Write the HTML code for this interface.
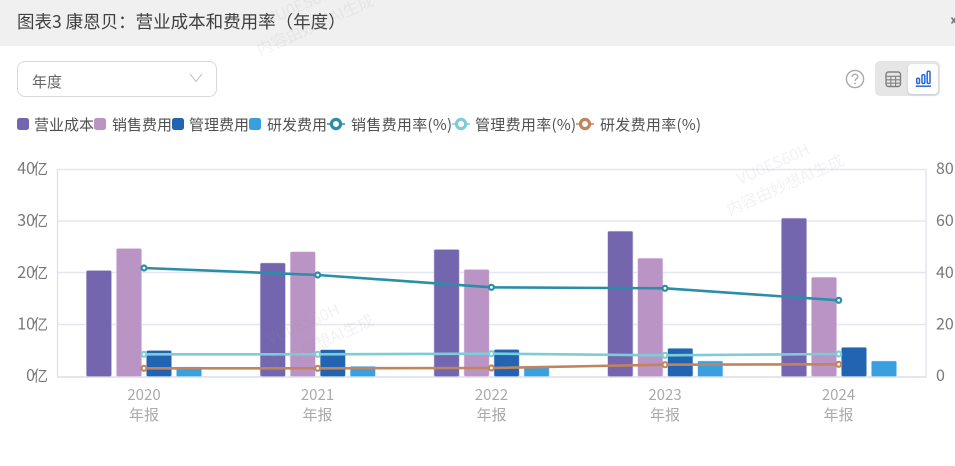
<!DOCTYPE html>
<html>
<head>
<meta charset="utf-8">
<style>
html,body{margin:0;padding:0;background:#fff;}
body{width:955px;height:466px;overflow:hidden;position:relative;font-family:"Noto Sans CJK SC","Liberation Sans",sans-serif;}
.hd{position:absolute;left:0;top:0;width:955px;height:46px;background:#f0f0f0;}
.t{position:absolute;white-space:nowrap;}
.title{left:17px;top:10px;font-size:17.5px;line-height:24px;color:#404040;}
.sel{position:absolute;left:17px;top:61px;width:198px;height:34px;border:1px solid #d9d9d9;border-radius:8px;background:#fff;}
.sel span{position:absolute;left:14px;top:9px;font-size:15px;line-height:22px;color:#666;}
.tog{position:absolute;left:875px;top:61px;width:65px;height:35px;background:#e6e6e6;border-radius:5px;}
.tog i{position:absolute;left:33px;top:3px;width:30px;height:30px;background:#fff;border-radius:4px;box-shadow:0 1px 2px rgba(120,140,190,.35);}
.lg{position:absolute;top:115px;font-size:15px;line-height:20px;color:#505050;white-space:nowrap;}
.lg.r{letter-spacing:.3px;}
.sq{position:absolute;top:118px;width:12px;height:12px;border-radius:2.5px;}
svg.c{position:absolute;left:0;top:0;}
</style>
</head>
<body>
<div class="hd"></div>
<div class="t title">图表3 康恩贝：营业成本和费用率（年度）</div>
<svg style="position:absolute;left:950px;top:16px" width="5" height="9" viewBox="0 0 5 9"><path d="M1.5 1.5L6 7.5M6 1.5L1.5 7.5" stroke="#777" stroke-width="1.6" fill="none"/></svg>

<div class="sel"><span>年度</span>
<svg style="position:absolute;left:171px;top:11px" width="14" height="10" viewBox="0 0 14 10"><path d="M1 1 L7 8.5 L13 1" fill="none" stroke="#c4c4c4" stroke-width="1.1"/></svg>
</div>

<svg style="position:absolute;left:845px;top:69px" width="20" height="20" viewBox="0 0 20 20"><circle cx="10" cy="10" r="8.6" fill="none" stroke="#a8a8a8" stroke-width="1.4"/><path d="M7.2 7.9C7.2 6.2 8.5 5.2 10 5.2S12.8 6.2 12.8 7.7C12.8 9.6 10 9.8 10 12" fill="none" stroke="#a8a8a8" stroke-width="1.4"/><circle cx="10" cy="14.4" r=".9" fill="#a8a8a8"/></svg>

<div class="tog"><i></i>
<svg style="position:absolute;left:10px;top:10px" width="17" height="17" viewBox="0 0 17 17"><rect x="1" y="1" width="14.5" height="14.5" rx="2.5" fill="none" stroke="#808080" stroke-width="1.4"/><path d="M1 5.3H15.5M1 8.8H15.5M1 12.2H15.5M5.8 5.3V15.5M10.6 5.3V15.5" stroke="#808080" stroke-width="1.1" fill="none"/></svg>
<svg style="position:absolute;left:40px;top:9px" width="17" height="18" viewBox="0 0 17 18"><g fill="none" stroke="#2468dc" stroke-width="1.5"><rect x="1.7" y="8.2" width="2.8" height="5.3" rx="1.2"/><rect x="7" y="4.7" width="2.8" height="8.8" rx="1.2"/><rect x="12.2" y="1.2" width="2.8" height="12.3" rx="1.2"/><path d="M0.8 16.2H16"/></g></svg>
</div>

<!-- legend -->
<div class="sq" style="left:17px;background:#7365ae"></div>
<div class="lg" style="left:34px">营业成本</div>
<div class="sq" style="left:94px;background:#ba94c4"></div>
<div class="lg" style="left:112px">销售费用</div>
<div class="sq" style="left:172px;background:#2264b2"></div>
<div class="lg" style="left:189px">管理费用</div>
<div class="sq" style="left:249px;background:#38a0de"></div>
<div class="lg" style="left:267px">研发费用</div>
<svg class="c" style="left:327px;top:115px" width="18" height="18" viewBox="0 0 18 18"><path d="M0 9H18" stroke="#2b8ea8" stroke-width="1.6"/><circle cx="9" cy="9" r="4.6" fill="#fff" stroke="#2b8ea8" stroke-width="3.2"/></svg>
<div class="lg r" style="left:351px">销售费用率(%)</div>
<svg class="c" style="left:452px;top:115px" width="18" height="18" viewBox="0 0 18 18"><path d="M0 9H18" stroke="#7ccdd5" stroke-width="1.6"/><circle cx="9" cy="9" r="4.6" fill="#fff" stroke="#7ccdd5" stroke-width="3.2"/></svg>
<div class="lg r" style="left:475px">管理费用率(%)</div>
<svg class="c" style="left:576px;top:115px" width="18" height="18" viewBox="0 0 18 18"><path d="M0 9H18" stroke="#c2845c" stroke-width="1.6"/><circle cx="9" cy="9" r="4.6" fill="#fff" stroke="#c2845c" stroke-width="3.2"/></svg>
<div class="lg r" style="left:600px">研发费用率(%)</div>

<svg class="c" width="955" height="466" viewBox="0 0 955 466">
<!-- grid -->
<g fill="none" stroke="#e4e7f1" stroke-width="1.5">
<path d="M58 169.5H926M58 221H926M58 272.5H926M58 324.5H926"/>
</g>
<path d="M58 377H926" stroke="#dfe3ee" stroke-width="1.7"/>
<path d="M57.5 169V377.5M926 169V377.5" stroke="#dcdfe8" stroke-width="1.2"/>

<!-- axis labels -->
<g font-family="Noto Sans CJK SC,Liberation Sans,sans-serif" font-size="16" fill="#777" text-anchor="end">
<text x="48" y="174">40<tspan dx="-2" font-size="15">亿</tspan></text>
<text x="48" y="226">30<tspan dx="-2" font-size="15">亿</tspan></text>
<text x="48" y="278">20<tspan dx="-2" font-size="15">亿</tspan></text>
<text x="48" y="329.5">10<tspan dx="-2" font-size="15">亿</tspan></text>
<text x="48" y="381">0<tspan dx="-2" font-size="15">亿</tspan></text>
</g>
<g font-family="Noto Sans CJK SC,Liberation Sans,sans-serif" font-size="16" fill="#777">
<text x="936" y="174">80</text>
<text x="936" y="226">60</text>
<text x="936" y="278">40</text>
<text x="936" y="329.5">20</text>
<text x="936" y="381">0</text>
</g>
<g font-family="Noto Sans CJK SC,Liberation Sans,sans-serif" font-size="15" fill="#aaa" text-anchor="middle">
<text x="144" y="400">2020</text><text x="144" y="420">年报</text>
<text x="317.5" y="400">2021</text><text x="317.5" y="420">年报</text>
<text x="491.5" y="400">2022</text><text x="491.5" y="420">年报</text>
<text x="665" y="400">2023</text><text x="665" y="420">年报</text>
<text x="838.5" y="400">2024</text><text x="838.5" y="420">年报</text>
</g>

<!-- bars -->
<g fill="#7365ae" stroke="#c8c2e0" stroke-width=".6">
<rect x="86.3" y="270.5" width="25.2" height="106" rx="1.5"/>
<rect x="260.2" y="263" width="25.2" height="113.5" rx="1.5"/>
<rect x="434" y="249.5" width="25.2" height="127" rx="1.5"/>
<rect x="607.7" y="231.2" width="25.2" height="145.3" rx="1.5"/>
<rect x="781.4" y="218.2" width="25.2" height="158.3" rx="1.5"/>
</g>
<g fill="#ba94c4" stroke="#e6d8ec" stroke-width=".6">
<rect x="116.4" y="248.5" width="25.2" height="128" rx="1.5"/>
<rect x="290.2" y="251.7" width="25.2" height="124.8" rx="1.5"/>
<rect x="464" y="269.5" width="25.2" height="107" rx="1.5"/>
<rect x="637.7" y="258.2" width="25.2" height="118.3" rx="1.5"/>
<rect x="811.4" y="277.2" width="25.2" height="99.3" rx="1.5"/>
</g>
<g fill="#2264b2" stroke="#b7cde8" stroke-width=".6">
<rect x="146.4" y="350.5" width="25.2" height="26" rx="1.5"/>
<rect x="320.2" y="349.7" width="25.2" height="26.8" rx="1.5"/>
<rect x="494" y="349.5" width="25.2" height="27" rx="1.5"/>
<rect x="667.7" y="348.3" width="25.2" height="28.2" rx="1.5"/>
<rect x="841.4" y="347.3" width="25.2" height="29.2" rx="1.5"/>
</g>
<g fill="#38a0de" stroke="#bfe0f5" stroke-width=".6">
<rect x="176.4" y="367" width="25.2" height="9.5" rx="1"/>
<rect x="350.2" y="366.3" width="25.2" height="10.2" rx="1"/>
<rect x="524" y="366.7" width="25.2" height="9.8" rx="1"/>
<rect x="697.7" y="361" width="25.2" height="15.5" rx="1"/>
<rect x="871.4" y="361" width="25.2" height="15.5" rx="1"/>
</g>

<!-- lines -->
<g fill="none" stroke-width="2.6">
<polyline stroke="#2b8ea8" points="144,268 317.7,275 491.4,287.3 665,288.3 838.7,300.3"/>
<polyline stroke="#7ccdd5" points="144,354.3 317.7,354.3 491.4,353.7 665,355.3 838.7,354"/>
<polyline stroke="#c2845c" points="144,368.3 317.7,368.3 491.4,368 665,364.7 838.7,364.3"/>
</g>
<g fill="#fff" stroke-width="2.2">
<g stroke="#2b8ea8"><circle cx="144" cy="268" r="2.5"/><circle cx="317.7" cy="275" r="2.5"/><circle cx="491.4" cy="287.3" r="2.5"/><circle cx="665" cy="288.3" r="2.5"/><circle cx="838.7" cy="300.3" r="2.5"/></g>
<g stroke="#7ccdd5"><circle cx="144" cy="354.3" r="2.5"/><circle cx="317.7" cy="354.3" r="2.5"/><circle cx="491.4" cy="353.7" r="2.5"/><circle cx="665" cy="355.3" r="2.5"/><circle cx="838.7" cy="354" r="2.5"/></g>
<g stroke="#c2845c"><circle cx="144" cy="368.3" r="2.5"/><circle cx="317.7" cy="368.3" r="2.5"/><circle cx="491.4" cy="368" r="2.5"/><circle cx="665" cy="364.7" r="2.5"/><circle cx="838.7" cy="364.3" r="2.5"/></g>
</g>

<!-- watermarks -->
<g font-family="Noto Sans CJK SC,Liberation Sans,sans-serif" font-size="16" fill="#999" fill-opacity=".13">
<g transform="translate(740,185) rotate(-24)"><text x="0" y="0">VU0ES60H</text><text x="-22" y="24">内容由妙想AI生成</text></g>
<g transform="translate(270,345) rotate(-24)"><text x="0" y="0">VU0ES60H</text><text x="-22" y="24">内容由妙想AI生成</text></g>
<g transform="translate(270,25) rotate(-24)"><text x="0" y="0">VU0ES60H</text><text x="-22" y="24">内容由妙想AI生成</text></g>
</g>
</svg>
</body>
</html>
